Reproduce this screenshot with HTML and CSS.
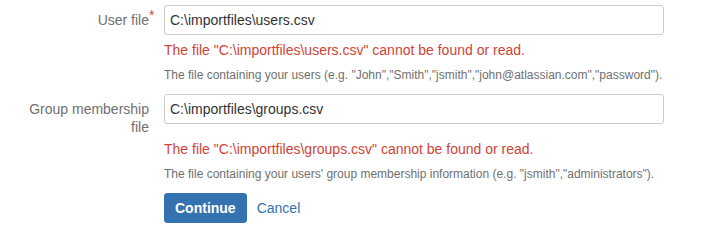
FILE: index.html
```html
<!DOCTYPE html>
<html lang="en">
<head>
<meta charset="utf-8">
<title>Import users</title>
<link rel="stylesheet" href="styles.css">
</head>
<body>
<form class="form">
  <div class="field-group">
    <label class="label" for="userfile">User file<span class="required">*</span></label>
    <div class="cell"><input class="text" id="userfile" type="text" value="C:\importfiles\users.csv"></div>
    <div class="error">The file "C:\importfiles\users.csv" cannot be found or read.</div>
    <div class="description">The file containing your users (e.g. "John","Smith","jsmith","john@atlassian.com","password").</div>
  </div>
  <div class="field-group">
    <label class="label" for="groupfile">Group membership file</label>
    <div class="cell"><input class="text" id="groupfile" type="text" value="C:\importfiles\groups.csv"></div>
    <div class="error">The file "C:\importfiles\groups.csv" cannot be found or read.</div>
    <div class="description">The file containing your users' group membership information (e.g. "jsmith","administrators").</div>
  </div>
  <div class="buttons">
    <button class="button" type="button">Continue</button>
    <a class="cancel" href="#">Cancel</a>
  </div>
</form>
</body>
</html>
```
FILE: styles.css
```css
html, body {
  margin: 0;
  padding: 0;
  background: #ffffff;
}

body {
  font-family: Arial, "Liberation Sans", sans-serif;
  font-size: 14px;
  line-height: 20px;
  color: #333333;
}

.form {
  padding-left: 19px;
}

.field-group {
  display: grid;
  grid-template-columns: 130px 500px;
  column-gap: 15px;
  align-items: start;
  padding: 5px 0 4px;
}

.label {
  grid-column: 1;
  grid-row: 1;
  position: relative;
  text-align: right;
  color: #707070;
  line-height: 18px;
  padding: 6px 0 3px;
}

.required {
  position: absolute;
  left: 100%;
  top: 3px;
  color: #d04437;
  font-size: 14px;
  line-height: 14px;
}

.cell {
  grid-column: 2;
  grid-row: 1;
  padding-bottom: 5px;
}

.text {
  display: block;
  box-sizing: border-box;
  width: 500px;
  height: 30px;
  margin: 0;
  padding: 4px 5px;
  border: 1px solid #cccccc;
  border-radius: 3px;
  font-family: Arial, "Liberation Sans", sans-serif;
  font-size: 14px;
  line-height: 20px;
  color: #333333;
  background: #ffffff;
}

.error {
  grid-column: 2;
  color: #d04437;
  font-size: 14px;
  line-height: 20px;
}

.description {
  grid-column: 2;
  margin-top: 5px;
  color: #707070;
  font-size: 12px;
  line-height: 20px;
}

.buttons {
  display: flex;
  align-items: center;
  gap: 10px;
  padding: 5px 0 0 145px;
}

.button {
  box-sizing: border-box;
  height: 30px;
  margin: 0;
  padding: 4px 10px;
  border: 1px solid #3572b0;
  border-radius: 3px;
  background: #3572b0;
  color: #ffffff;
  font-family: Arial, "Liberation Sans", sans-serif;
  font-size: 14px;
  font-weight: bold;
  line-height: 20px;
}

.cancel {
  color: #3572b0;
  text-decoration: none;
  font-size: 14px;
  line-height: 20px;
}
```
